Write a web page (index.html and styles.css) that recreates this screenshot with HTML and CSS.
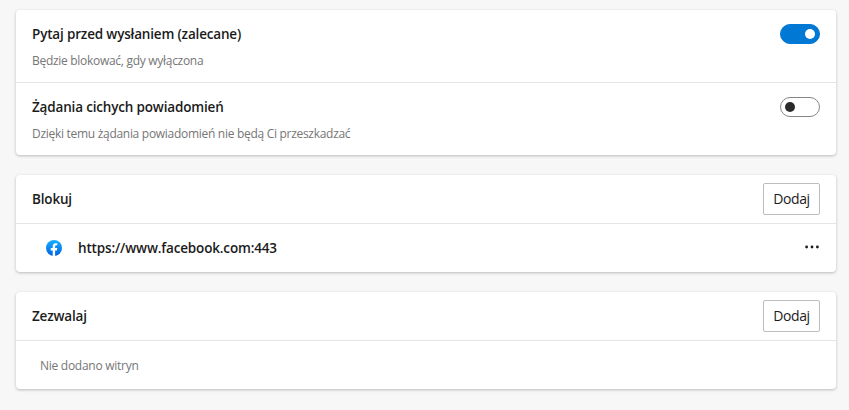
FILE: index.html
```html
<!DOCTYPE html>
<html lang="pl">
	<head>
		<meta charset="utf-8">
		<title>Powiadomienia</title>
		<link rel="stylesheet" href="styles.css">
	</head>
	<body>
		<div class="card">
			<div class="setting">
				<div>
					<h2 class="title">Pytaj przed wysłaniem (zalecane)</h2>
					<p class="hint">Będzie blokować, gdy wyłączona</p>
				</div>
				<button class="toggle on" type="button" role="switch" aria-checked="true"></button>
			</div>
			<div class="setting">
				<div>
					<h2 class="title">Żądania cichych powiadomień</h2>
					<p class="hint">Dzięki temu żądania powiadomień nie będą Ci przeszkadzać</p>
				</div>
				<button class="toggle" type="button" role="switch" aria-checked="false"></button>
			</div>
		</div>

		<div class="card">
			<div class="head">
				<h2 class="title">Blokuj</h2>
				<button class="add" type="button">Dodaj</button>
			</div>
			<div class="site">
				<svg width="16" height="16" viewBox="0 0 16 16">
					<defs>
						<linearGradient id="blue" x1="0" y1="0" x2="0" y2="1">
							<stop offset="0" stop-color="#19aeff"/>
							<stop offset="1" stop-color="#0062e0"/>
						</linearGradient>
					</defs>
					<circle cx="8" cy="8" r="8" fill="url(#blue)"/>
					<path d="M6.700 16v-5.600H4.700V8h2V6.300c0-2 1.200-3.100 3-3.100.9 0 1.600.1 1.600.1v2h-1c-1 0-1.200.6-1.200 1.200V8h2.200l-.4 2.400H9.100V16z" fill="#fff"/>
				</svg>
				<span class="url">https://www.facebook.com:443</span>
				<svg class="more" width="14" height="4" viewBox="0 0 14 4">
					<circle cx="1.600" cy="2" r="1.400"/>
					<circle cx="7" cy="2" r="1.400"/>
					<circle cx="12.400" cy="2" r="1.400"/>
				</svg>
			</div>
		</div>

		<div class="card">
			<div class="head">
				<h2 class="title">Zezwalaj</h2>
				<button class="add" type="button">Dodaj</button>
			</div>
			<p class="empty">Nie dodano witryn</p>
		</div>
	</body>
</html>
```

FILE: styles.css
```css
body {
	margin: 0;
	padding: 10px 13px 0 16px;
	background-color: #f7f7f7;
	color: #1b1b1b;
	font-family: "Open Sans", "Noto Sans", sans-serif;
	font-size: 14px;
}

.card {
	margin-bottom: 20px;
	background-color: white;
	border-radius: 4px;
	box-shadow: 0 1px 3px rgba(0, 0, 0, .25);
}

.setting {
	display: flex;
	justify-content: space-between;
	align-items: flex-start;
	box-sizing: border-box;
	height: 72px;
	padding: 14px 16px 0;
}

.setting + .setting {
	height: 73px;
	border-top: 1px solid #e5e5e5;
}

.title {
	margin: 0;
	font-size: 13.5px;
	font-weight: 600;
	line-height: 20px;
	letter-spacing: -.17px;
}

.hint {
	margin: 9px 0 0;
	color: #767676;
	font-size: 12px;
	line-height: 16px;
	letter-spacing: -.29px;
}

.toggle {
	display: flex;
	align-items: center;
	box-sizing: border-box;
	width: 40px;
	height: 20px;
	padding: 0 4px;
	border: 1px solid #868686;
	border-radius: 10px;
	background-color: white;
}

.toggle::before {
	content: "";
	width: 10px;
	height: 10px;
	border-radius: 50%;
	background-color: #2b2b2b;
}

.toggle.on {
	justify-content: flex-end;
	border-color: #0078d4;
	background-color: #0078d4;
}

.toggle.on::before {
	background-color: white;
}

.head {
	display: flex;
	justify-content: space-between;
	align-items: center;
	height: 48px;
	padding: 0 16px;
	border-bottom: 1px solid #e5e5e5;
}

.add {
	box-sizing: border-box;
	width: 57px;
	height: 32px;
	padding: 0 0 2px;
	border: 1px solid #bdbdbd;
	border-radius: 2px;
	background-color: white;
	color: #1b1b1b;
	font-family: inherit;
	font-size: 14px;
	letter-spacing: -.4px;
}

.site {
	display: flex;
	align-items: center;
	height: 48px;
	padding: 0 17px 0 30px;
}

.url {
	flex: 1;
	margin-left: 16px;
	font-size: 13.5px;
	font-weight: 600;
	letter-spacing: -.16px;
}

.more {
	margin-bottom: 2px;
	fill: #1b1b1b;
}

.empty {
	margin: 0;
	padding: 1px 0 0 24px;
	color: #767676;
	font-size: 12px;
	line-height: 47px;
	letter-spacing: -.27px;
}
```
